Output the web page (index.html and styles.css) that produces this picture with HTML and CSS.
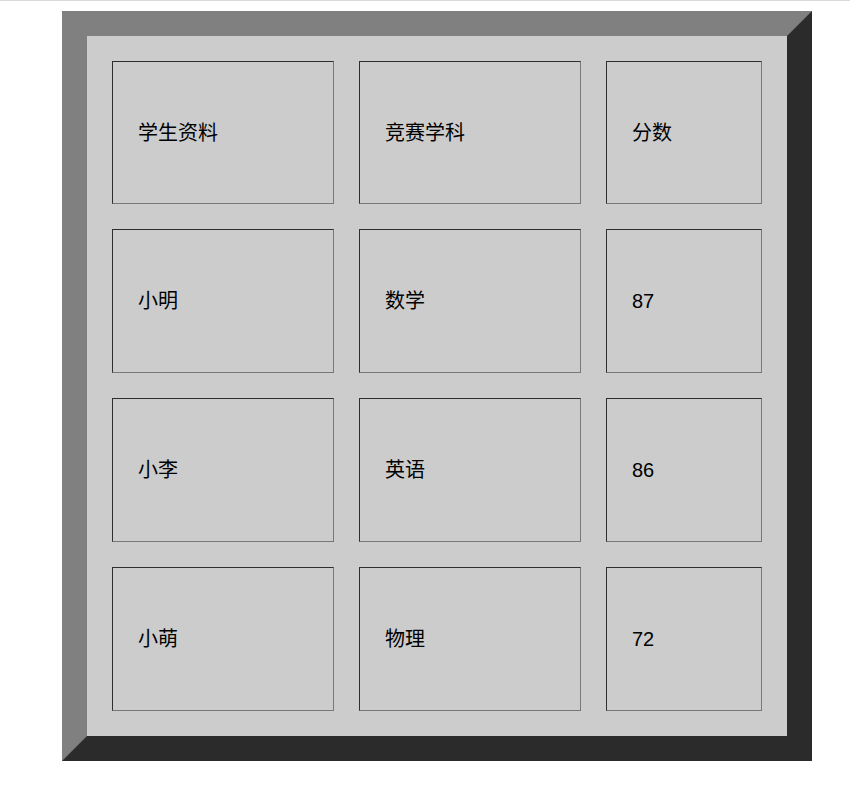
FILE: index.html
```html
<!DOCTYPE html>
<html lang="zh">
<head>
<meta charset="utf-8">
<title>成绩表</title>
<link rel="stylesheet" href="styles.css">
</head>
<body>
<div class="topline"></div>
<div class="board">
  <div class="grid">
    <div class="cell">学生资料</div>
    <div class="cell">竞赛学科</div>
    <div class="cell">分数</div>
    <div class="cell">小明</div>
    <div class="cell">数学</div>
    <div class="cell">87</div>
    <div class="cell">小李</div>
    <div class="cell">英语</div>
    <div class="cell">86</div>
    <div class="cell">小萌</div>
    <div class="cell">物理</div>
    <div class="cell">72</div>
  </div>
</div>
</body>
</html>
```
FILE: styles.css
```css
html, body {
  margin: 0;
  padding: 0;
  background: #ffffff;
}
body {
  font-family: "Liberation Sans", "Noto Sans CJK SC", sans-serif;
  font-size: 20px;
  color: #000000;
}
.topline {
  height: 1px;
  background: #d9d9d9;
}
.board {
  width: 700px;
  margin: 10px 0 0 62px;
  border-style: solid;
  border-width: 25px;
  border-color: #808080 #2b2b2b #2b2b2b #808080;
  background: #cccccc;
}
.grid {
  display: grid;
  grid-template-columns: 222px 222px 156px;
  grid-template-rows: 143px 144px 144px 144px;
  gap: 25px;
  padding: 25px;
}
.cell {
  box-sizing: border-box;
  border-style: solid;
  border-width: 1px;
  border-color: #2e2e2e #787878 #787878 #2e2e2e;
  padding: 0 25px;
  display: flex;
  align-items: center;
  line-height: 1.2;
}
```
